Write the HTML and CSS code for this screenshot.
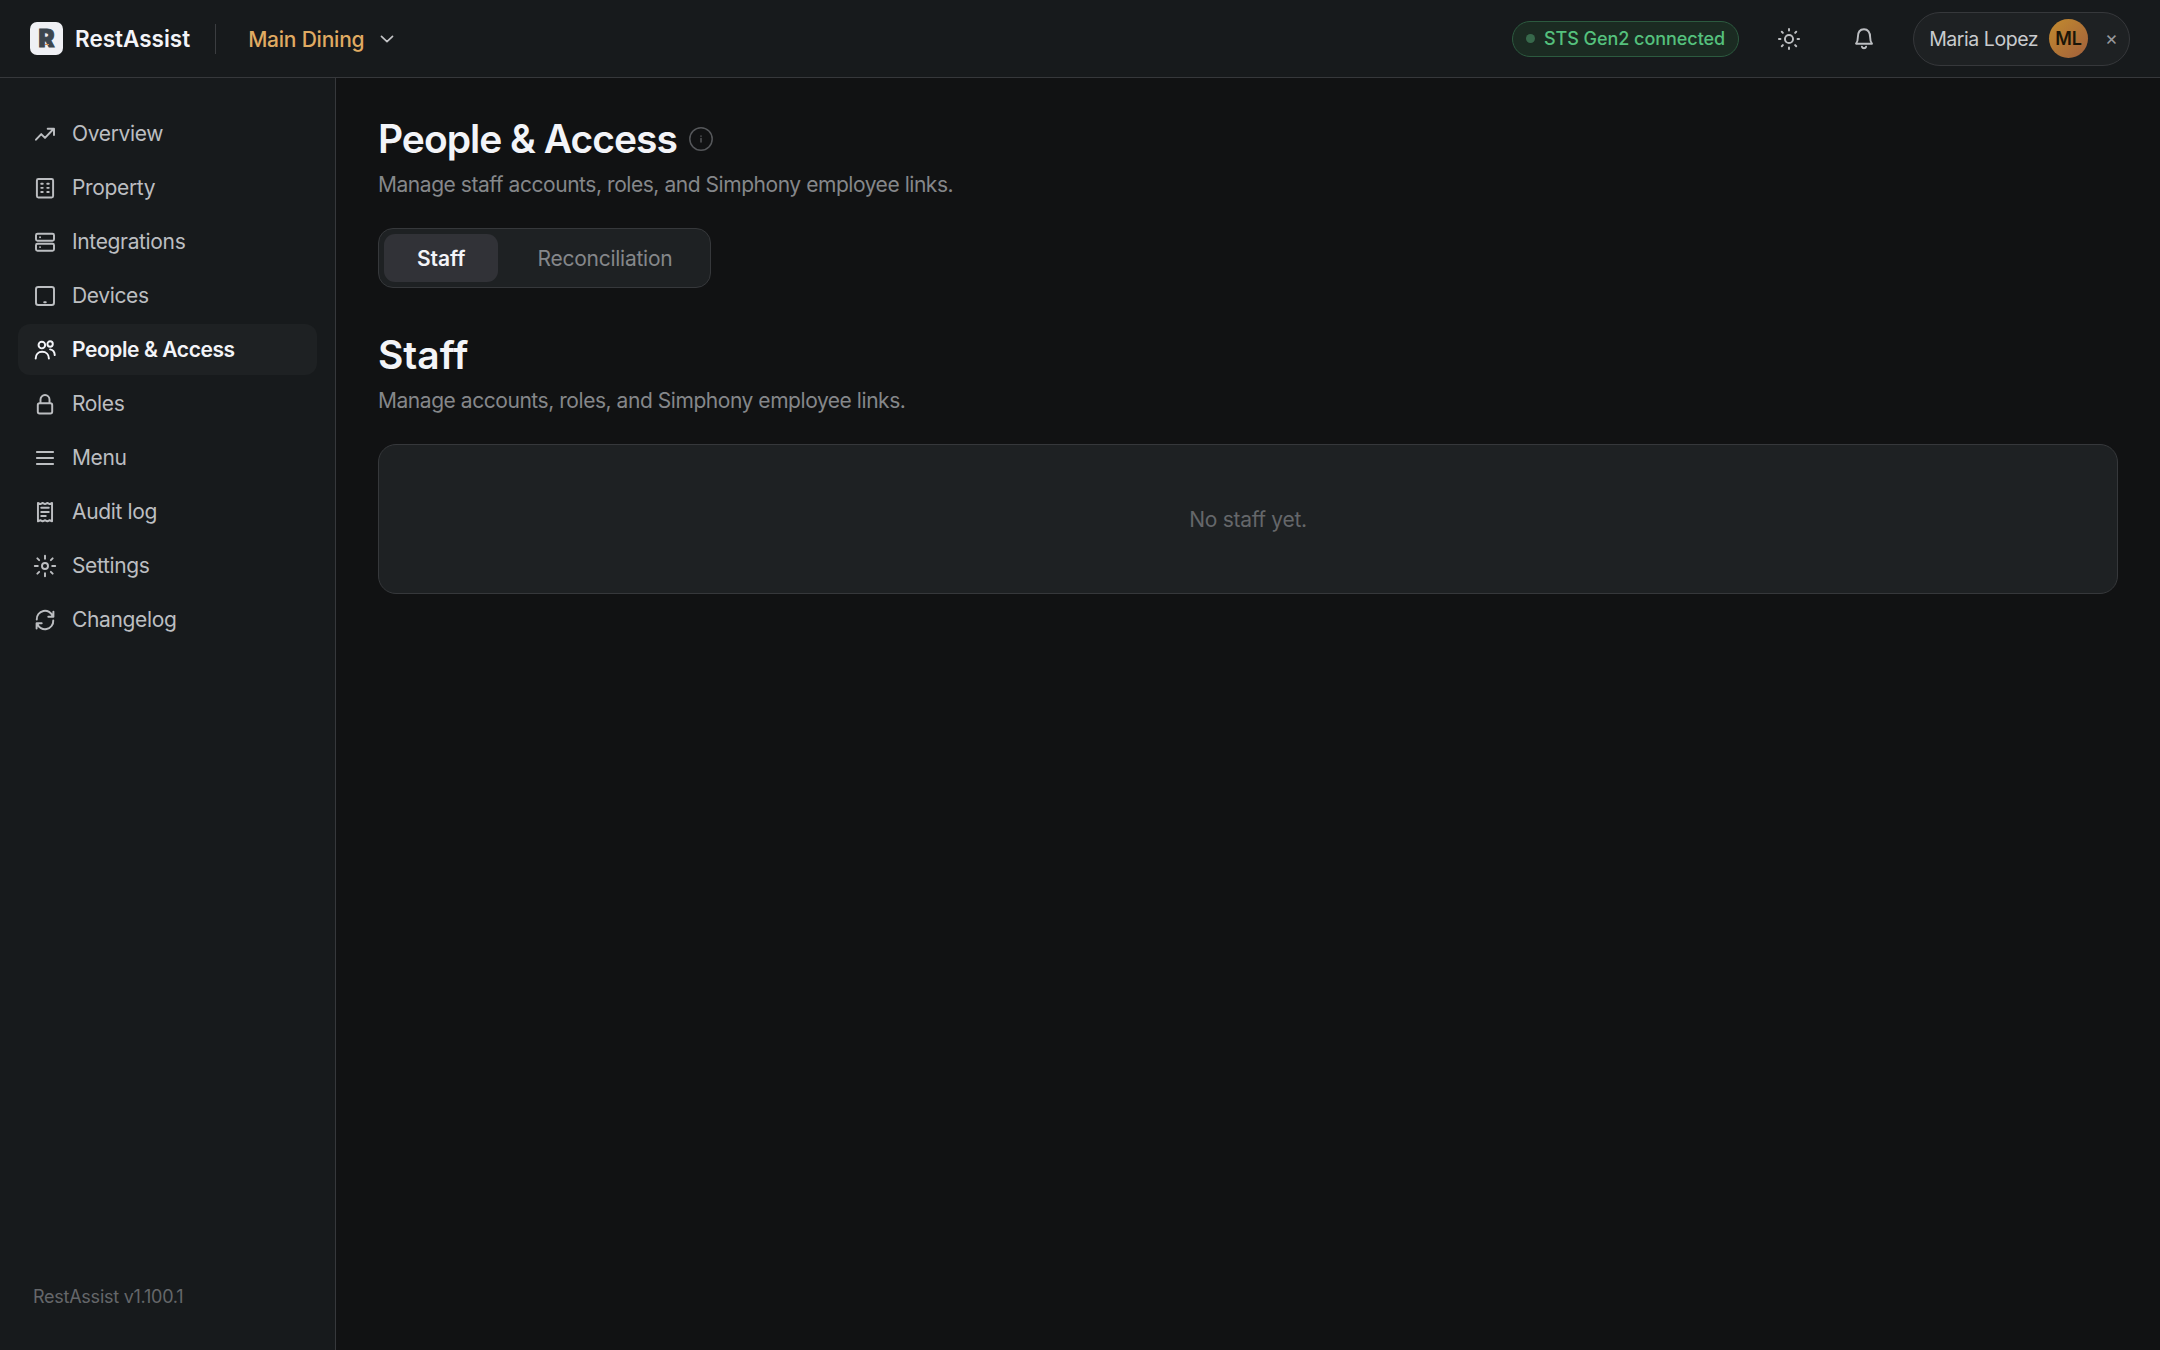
FILE: index.html
```html
<!doctype html>
<html lang="en">
<head>
<meta charset="utf-8" />
<title>RestAssist</title>
<link rel="stylesheet" href="styles.css">
</head>
<body>

<header class="topbar">
	<div class="logo"><span class="logo-letter">R</span></div>
	<span class="brand">RestAssist</span>
	<span class="divider"></span>
	<button class="venue">
		<span class="venue-name">Main Dining</span>
		<svg class="chevron" viewBox="0 0 12 12"><path d="M2.3 4.2L6 7.8l3.7-3.6" /></svg>
	</button>
	<div class="spacer"></div>
	<span class="status"><i class="status-dot"></i>STS Gen2 connected</span>
	<button class="icon-button">
		<svg class="icon" viewBox="0 0 16 16"><circle cx="8" cy="8" r="2.7" /><path d="M8 1.3v1M8 13.7v1M1.3 8h1M13.7 8h1M3.2 3.2l.7.7M12.1 12.1l.7.7M3.2 12.8l.7-.7M12.1 3.9l.7-.7" /></svg>
	</button>
	<button class="icon-button">
		<svg class="icon" viewBox="0 0 16 16"><path d="M2.7 11.1h10.6c-.9-1-1.2-2.2-1.2-4.3C12.1 3.4 10.5 1.5 8 1.5S3.9 3.4 3.9 6.8c0 2.1-.3 3.3-1.2 4.3zM6.6 13.2c.2.7.7 1 1.4 1s1.2-.3 1.4-1" /></svg>
	</button>
	<div class="user">
		<span class="user-name">Maria Lopez</span>
		<span class="avatar">ML</span>
		<span class="user-close">×</span>
	</div>
</header>

<div class="layout">
	<nav class="sidebar">
		<a class="nav-item"><svg class="icon" viewBox="0 0 16 16"><path d="M2 11.8l3.5-3.7L8 10.6l5.8-6.1M9.8 4.5H14v4.2" /></svg>Overview</a>
		<a class="nav-item"><svg class="icon" viewBox="0 0 16 16"><rect x="2.6" y="2" width="10.8" height="12.3" rx="1" /><path d="M5.5 5.2h1M9.5 5.2h1M5.5 7.9h1M9.5 7.9h1M5.5 10.6h1M9.5 10.6h1" /></svg>Property</a>
		<a class="nav-item"><svg class="icon" viewBox="0 0 16 16"><rect x="2" y="2.5" width="12" height="4.7" rx="1" /><rect x="2" y="9.1" width="12" height="4.7" rx="1" /><path d="M4.7 4.8h.01M4.7 11.4h.01" /></svg>Integrations</a>
		<a class="nav-item"><svg class="icon" viewBox="0 0 16 16"><rect x="2" y="2" width="12" height="12" rx="1.5" /><path d="M7.5 12.2h1" /></svg>Devices</a>
		<a class="nav-item active"><svg class="icon" viewBox="0 0 16 16"><circle cx="5.9" cy="4.7" r="2.2" /><path d="M1.8 13.6c0-2.7 1.7-4.4 4.3-4.4s4.5 1.7 4.5 4.4" /><circle cx="11.4" cy="4" r="1.8" /><path d="M11.4 7.6c1.9.3 3 1.7 3.1 3.8" /></svg>People &amp; Access</a>
		<a class="nav-item"><svg class="icon" viewBox="0 0 16 16"><rect x="3.2" y="7.5" width="9.6" height="6.8" rx="1.2" /><path d="M5 7.3V5a3 3 0 0 1 6 0v2.3" /></svg>Roles</a>
		<a class="nav-item"><svg class="icon" viewBox="0 0 16 16"><path d="M2.6 4h10.8M2.6 8h10.8M2.6 12h10.8" /></svg>Menu</a>
		<a class="nav-item"><svg class="icon" viewBox="0 0 16 16"><path d="M3.3 2l1.6.7L6.4 2l1.6.7L9.6 2l1.5.7 1.6-.7v12.2l-1.6-.7-1.5.7-1.6-.7-1.6.7-1.5-.7-1.6.7zM5.5 5.2h5M5.5 8h5M5.5 10.7h3" /></svg>Audit log</a>
		<a class="nav-item"><svg class="icon" viewBox="0 0 16 16"><circle cx="8" cy="8" r="2" /><path d="M8 1.2v2M8 12.8v2M1.2 8h2M12.8 8h2M2.9 2.9l1.2 1.2M11.9 11.9l1.2 1.2M2.9 13.1l1.2-1.2M11.9 4.1l1.2-1.2" /></svg>Settings</a>
		<a class="nav-item"><svg class="icon" viewBox="0 0 16 16"><path d="M2.5 7.7A5.5 5.5 0 0 1 13.2 5.6M13.5 8.3A5.5 5.5 0 0 1 2.8 10.4M13.6 2.4v3.4h-3.4M2.4 13.6v-3.4h3.4" /></svg>Changelog</a>
		<div class="version">RestAssist v1.100.1</div>
	</nav>

	<main class="content">
		<div class="title-row">
			<h1>People &amp; Access</h1>
			<svg class="info" viewBox="0 0 24 24"><circle cx="12" cy="12" r="11.2" /><path d="M12 11.5v3.5M12 9v.2" /></svg>
		</div>
		<p class="subtitle">Manage staff accounts, roles, and Simphony employee links.</p>

		<div class="tabs">
			<button class="tab selected">Staff</button>
			<button class="tab">Reconciliation</button>
		</div>

		<h2>Staff</h2>
		<p class="subtitle">Manage accounts, roles, and Simphony employee links.</p>

		<div class="card">No staff yet.</div>
	</main>
</div>
</body>
</html>
```

FILE: styles.css
```css
:root {
	--bg: #111213;
	--panel: #171a1c;
	--card: #1e2123;
	--line: #36383b;
	--text: #f3f4f8;
	--soft: #bcbec1;
	--muted: #85878a;
	--faint: #65676a;
}

* {
	box-sizing: border-box;
}

body {
	margin: 0;
	height: 100vh;
	display: flex;
	flex-direction: column;
	background: var(--bg);
	color: var(--text);
	font-family: Inter, "Liberation Sans", sans-serif;
	font-size: 21px;
}

h1, h2, p {
	margin: 0;
}

button {
	padding: 0;
	border: 0;
	background: none;
	color: inherit;
	font: inherit;
}

svg {
	display: block;
	fill: none;
	stroke: currentColor;
	stroke-linecap: round;
	stroke-linejoin: round;
}

.icon {
	width: 24px;
	height: 24px;
	stroke-width: 1.3;
	flex: none;
}

/* top bar */
.topbar {
	height: 78px;
	flex: none;
	display: flex;
	align-items: center;
	padding: 0 30px;
	background: var(--panel);
	border-bottom: 1px solid var(--line);
}

.logo {
	position: relative;
	width: 33px;
	height: 33px;
	display: flex;
	align-items: center;
	justify-content: center;
	border-radius: 7px;
	background: #eff0f4;
}
.logo-letter {
	color: #3c464e;
	font-size: 24px;
	font-weight: 900;
	line-height: 33px;
	-webkit-text-stroke: 1px #3c464e;
}
.logo::after {
	content: "";
	position: absolute;
	left: 15px;
	top: 22px;
	width: 4px;
	height: 1px;
	background: #d08a52;
}

.brand {
	margin-left: 12px;
	font-size: 22.5px;
	font-weight: 600;
}

.divider {
	width: 1px;
	height: 30px;
	margin: 0 32px 0 25px;
	background: #3b3d40;
}

.venue {
	display: flex;
	align-items: center;
	gap: 14px;
	color: #e0ab62;
	font-weight: 500;
	letter-spacing: -0.22px;
}
.venue-name {
	padding-top: 2px;
}
.chevron {
	width: 18px;
	height: 18px;
	color: #c4c5c7;
	stroke-width: 1.1;
}

.spacer {
	flex: 1;
}

.status {
	height: 36px;
	display: flex;
	align-items: center;
	gap: 9px;
	padding: 0 13px;
	border: 1px solid #2c5a3f;
	border-radius: 18px;
	background: #1b2b22;
	color: #55c17d;
	font-size: 18px;
	font-weight: 500;
	letter-spacing: -0.05px;
}
.status-dot {
	width: 9px;
	height: 9px;
	border-radius: 50%;
	background: #37694b;
}

.icon-button {
	width: 51px;
	height: 51px;
	margin-left: 24px;
	display: flex;
	align-items: center;
	justify-content: center;
	color: var(--soft);
}

.user {
	height: 54px;
	margin-left: 24px;
	display: flex;
	align-items: center;
	padding: 0 11px 0 15px;
	border: 1px solid var(--line);
	border-radius: 27px;
	background: var(--card);
	color: #c9cbce;
	font-size: 19.5px;
}
.user-name {
	letter-spacing: -0.45px;
}
.avatar {
	width: 39px;
	height: 39px;
	margin-left: 11px;
	display: flex;
	align-items: center;
	justify-content: center;
	border-radius: 50%;
	background: linear-gradient(135deg, #c38b2e, #a05f3c);
	color: #1a1508;
	font-size: 18px;
	font-weight: 600;
}
.user-close {
	margin-left: 17px;
	padding-bottom: 1px;
	color: #97999c;
	font-size: 19.5px;
}

/* sidebar */
.layout {
	flex: 1;
	display: flex;
	min-height: 0;
}

.sidebar {
	width: 336px;
	flex: none;
	display: flex;
	flex-direction: column;
	gap: 3px;
	padding: 30px 18px 43px;
	background: var(--panel);
	border-right: 1px solid var(--line);
}

.nav-item {
	height: 51px;
	display: flex;
	align-items: center;
	gap: 15px;
	padding: 0 15px;
	border-radius: 12px;
	color: var(--soft);
	letter-spacing: -0.35px;
}
.nav-item.active {
	background: #1e2123;
	color: var(--text);
	font-weight: 600;
	letter-spacing: -0.42px;
}

.version {
	margin-top: auto;
	padding: 0 15px;
	color: var(--faint);
	font-size: 18px;
	letter-spacing: -0.25px;
}

/* page */
.content {
	flex: 1;
	padding: 38px 42px;
}

.title-row {
	display: flex;
	align-items: center;
	gap: 12px;
}

h1, h2 {
	font-size: 39px;
	font-weight: 600;
	line-height: 45px;
}
h1 {
	letter-spacing: -1px;
}

.info {
	width: 24px;
	height: 24px;
	margin-top: 1px;
	color: #55575a;
	stroke-width: 1.5;
}

.subtitle {
	margin-top: 7px;
	color: var(--muted);
	line-height: 33px;
	letter-spacing: -0.45px;
}

.tabs {
	width: fit-content;
	height: 60px;
	margin-top: 27px;
	display: flex;
	gap: 6px;
	padding: 5px;
	border: 1px solid var(--line);
	border-radius: 15px;
	background: var(--card);
}
.tab {
	padding: 0 33px;
	border-radius: 11px;
	color: var(--muted);
	letter-spacing: -0.25px;
}
.tab.selected {
	background: #313237;
	color: var(--text);
	font-weight: 600;
	letter-spacing: -0.05px;
}

h2 {
	margin-top: 44px;
}

.card {
	height: 150px;
	margin-top: 27px;
	display: flex;
	align-items: center;
	justify-content: center;
	border: 1px solid var(--line);
	border-radius: 18px;
	background: var(--card);
	color: var(--faint);
	letter-spacing: -0.3px;
}
```
